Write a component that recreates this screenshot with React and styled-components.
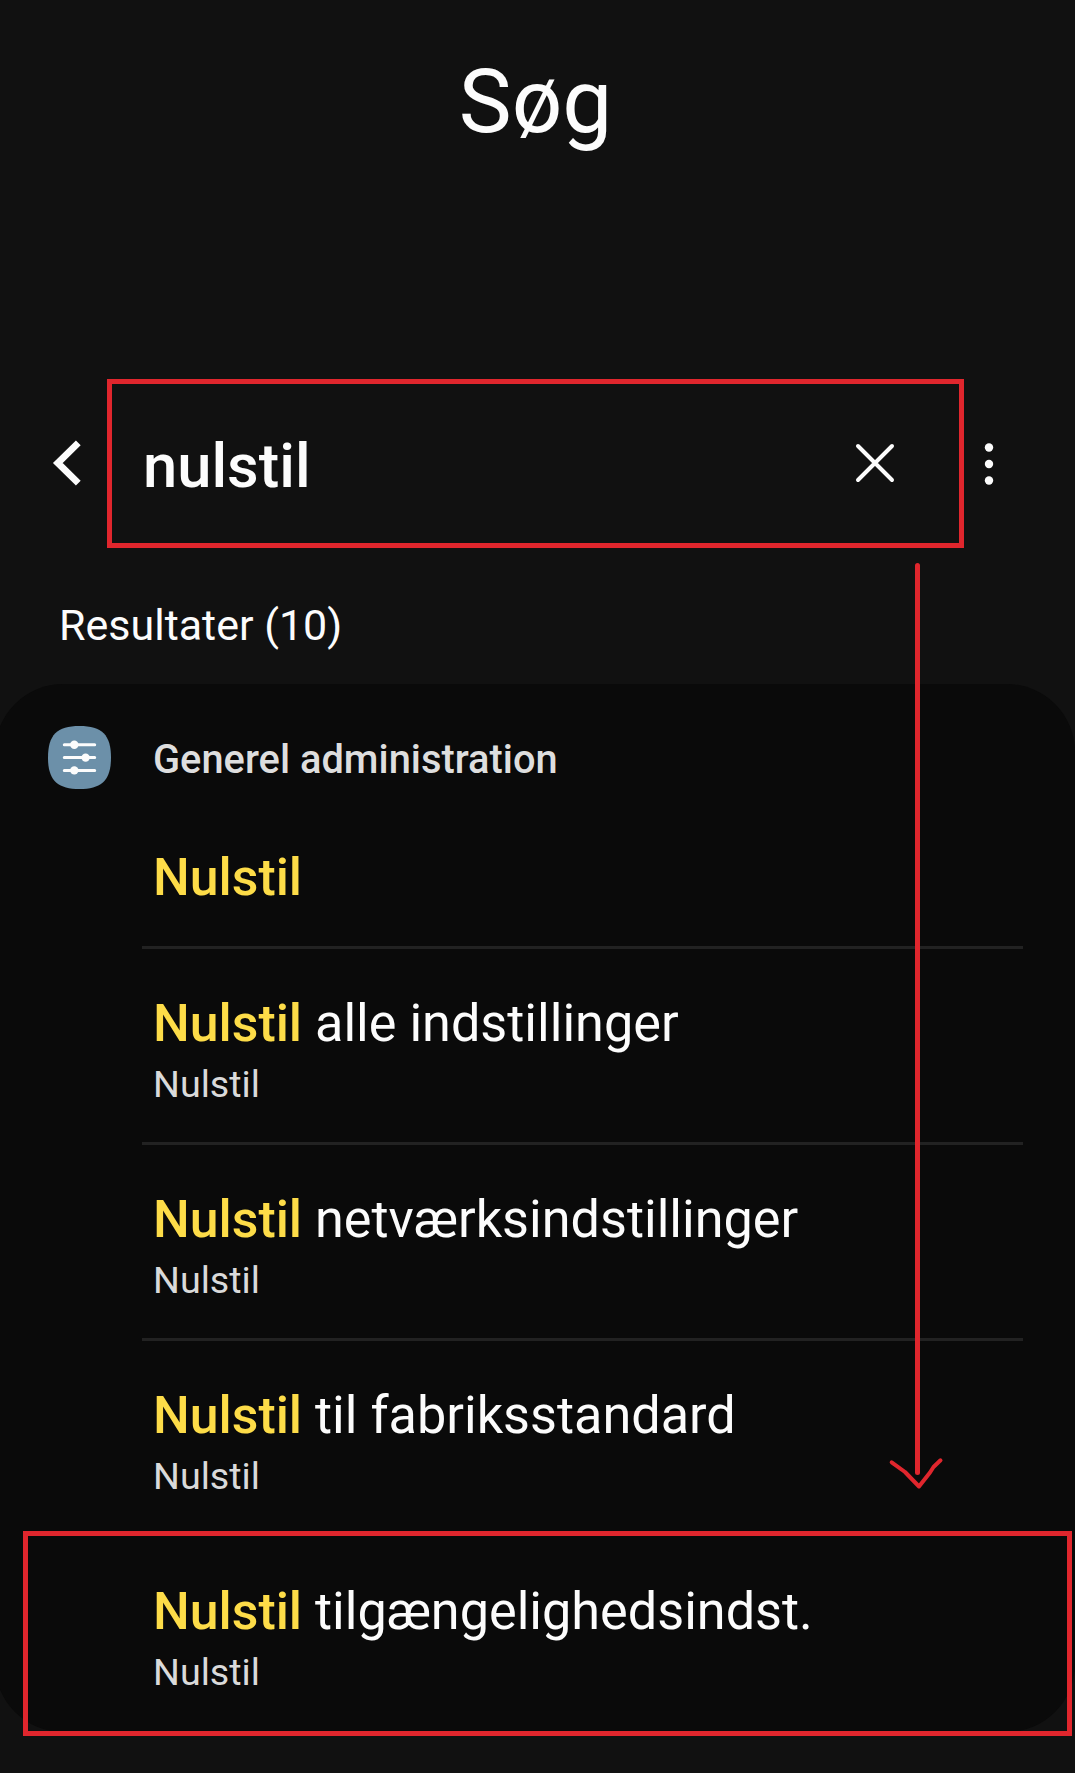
import React from "react";
import styled, { createGlobalStyle } from "styled-components";

const GlobalStyle = createGlobalStyle`
  * { box-sizing: border-box; }
  body { margin: 0; background: #111111; }
  h1, h2, p { margin: 0; font-weight: 400; }
`;

const Screen = styled.main`
  position: relative;
  width: 1075px;
  height: 1773px;
  overflow: hidden;
  background: #111111;
  color: #fcfcfc;
  font-family: Roboto, "Liberation Sans", sans-serif;
`;

const Header = styled.header`
  height: 379px;
  padding-top: 50px;
`;

const Title = styled.h1`
  text-align: center;
  font-size: 89px;
  line-height: 104px;
  padding-right: 4px;
`;

const SearchBar = styled.div`
  display: grid;
  grid-template-columns: 107px 857px 1fr;
  height: 169px;
`;

const IconButton = styled.button`
  display: flex;
  align-items: center;
  border: 0;
  background: none;
  color: inherit;
  padding: 0 0 ${(p) => p.$lift || 0}px ${(p) => p.$inset || 0}px;
`;

const SearchField = styled.div`
  display: flex;
  align-items: center;
  justify-content: space-between;
  padding: 0 64px 0 31px;
  border: 5px solid #e0262d;
`;

const Query = styled.span`
  font-size: 61.5px;
  font-weight: 500;
  line-height: 70px;
  padding-top: 4px;
`;

const ResultCount = styled.p`
  height: 136px;
  padding: 52px 0 0 59px;
  font-size: 43px;
  line-height: 50px;
`;

const Card = styled.section`
  height: 1048px;
  margin-left: -5px;
  padding-left: 5px;
  border-radius: 68px;
  background: #0a0a0a;
`;

const CategoryHeader = styled.div`
  display: flex;
  gap: 42px;
  height: 119px;
  padding: 42px 0 0 48px;
`;

const CategoryName = styled.h2`
  font-size: 39.8px;
  font-weight: 500;
  line-height: 46px;
  padding-top: 11px;
  color: #dedede;
`;

const ResultList = styled.div`
  display: flex;
  flex-direction: column;
  padding: 0 52px 0 142px;
`;

const ResultRow = styled.div`
  position: relative;
  height: ${(p) => (p.$single ? 146 : 196)}px;
  padding: 45px 0 0 11px;
  border-bottom: 3px solid ${(p) => (p.$divided ? "#222222" : "transparent")};
`;

const ResultTitle = styled.div`
  font-size: 52.2px;
  line-height: 60px;
  white-space: nowrap;
`;

const Match = styled.span`
  color: #fddc48;
  font-size: 51.8px;
  font-weight: 500;
`;

const ResultPath = styled.div`
  margin-top: 8px;
  font-size: 37.7px;
  line-height: 44px;
  color: #dadada;
`;

const Highlight = styled.div`
  position: absolute;
  top: -6px;
  left: -119px;
  width: 1049px;
  height: 205px;
  border: 5px solid #e0262d;
`;

const Arrow = styled.svg`
  position: absolute;
  left: 885px;
  top: 560px;
  pointer-events: none;
`;

const results = [
  { rest: "" },
  { rest: " alle indstillinger", path: "Nulstil" },
  { rest: " netværksindstillinger", path: "Nulstil" },
  { rest: " til fabriksstandard", path: "Nulstil" },
  { rest: " tilgængelighedsindst.", path: "Nulstil", highlighted: true },
];

const BackIcon = () => (
  <svg width="32" height="50" viewBox="0 0 32 50" fill="none">
    <path d="M27.3 4.8 L6.8 25 L27.3 45.2" stroke="#fcfcfc" strokeWidth="6.8" strokeLinejoin="miter" />
  </svg>
);

const ClearIcon = () => (
  <svg width="40" height="40" viewBox="0 0 40 40" fill="none">
    <path d="M3 3 L37 37 M37 3 L3 37" stroke="#fcfcfc" strokeWidth="4" strokeLinecap="round" />
  </svg>
);

const MoreIcon = () => (
  <svg width="10" height="44" viewBox="0 0 10 44" fill="#fcfcfc">
    <circle cx="5" cy="5.5" r="4.2" />
    <circle cx="5" cy="22" r="4.2" />
    <circle cx="5" cy="38.5" r="4.2" />
  </svg>
);

const SlidersIcon = () => (
  <svg width="63" height="63" viewBox="0 0 63 63">
    <path
      d="M31.5 0 C54 0 63 9 63 31.5 C63 54 54 63 31.5 63 C9 63 0 54 0 31.5 C0 9 9 0 31.5 0 Z"
      fill="#6c90a9"
    />
    <path d="M16.3 18.7 H46.7 M16.3 31.6 H46.7 M16.3 44.4 H46.7" stroke="#fcfcfc" strokeWidth="3" strokeLinecap="round" />
    <g fill="#fcfcfc">
      <circle cx="26.3" cy="18.7" r="4.2" />
      <circle cx="37.6" cy="31.6" r="4.2" />
      <circle cx="26.3" cy="44.4" r="4.2" />
    </g>
  </svg>
);

export default function App() {
  return (
    <>
      <GlobalStyle />
      <Screen>
        <Header>
          <Title>Søg</Title>
        </Header>
        <SearchBar>
          <IconButton $inset={51} $lift={2} aria-label="Tilbage">
            <BackIcon />
          </IconButton>
          <SearchField>
            <Query>nulstil</Query>
            <IconButton $lift={2} aria-label="Ryd">
              <ClearIcon />
            </IconButton>
          </SearchField>
          <IconButton $inset={20} aria-label="Flere">
            <MoreIcon />
          </IconButton>
        </SearchBar>
        <ResultCount>Resultater (10)</ResultCount>
        <Card>
          <CategoryHeader>
            <SlidersIcon />
            <CategoryName>Generel administration</CategoryName>
          </CategoryHeader>
          <ResultList>
            {results.map((r, i) => (
              <ResultRow key={i} $single={!r.path} $divided={i < 3}>
                <ResultTitle>
                  <Match>Nulstil</Match>
                  {r.rest}
                </ResultTitle>
                {r.path && <ResultPath>{r.path}</ResultPath>}
                {r.highlighted && <Highlight />}
              </ResultRow>
            ))}
          </ResultList>
        </Card>
        <Arrow width="70" height="935" viewBox="0 0 70 935" fill="none" stroke="#e0262d" strokeLinecap="round" strokeLinejoin="round">
          <path d="M32.5 5.5 V912.5" strokeWidth="5" />
          <path d="M6.7 902.3 L20 912 L34 926.5 L45 912.5 L48.5 907 L55.5 900.3" strokeWidth="4" />
        </Arrow>
      </Screen>
    </>
  );
}
